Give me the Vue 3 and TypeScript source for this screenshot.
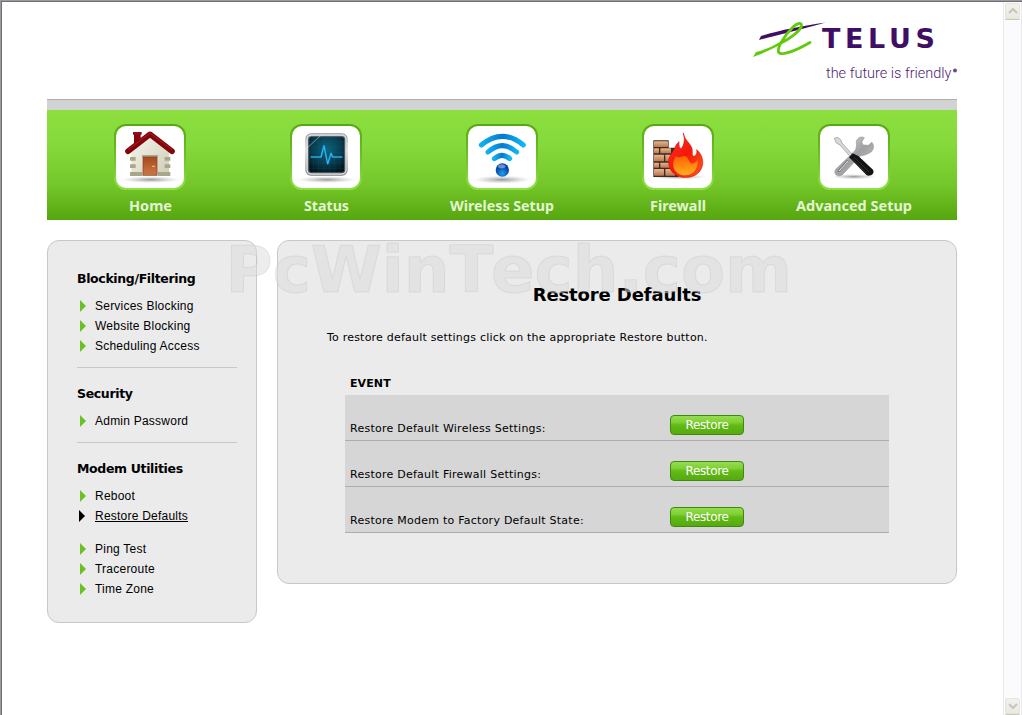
<script setup lang="ts">
interface NavItem {
  id: string
  label: string
  width: number
}
interface MenuLink {
  label: string
  active?: boolean
}
interface MenuGroup {
  title: string
  links: MenuLink[]
}

const nav: NavItem[] = [
  { id: 'home', label: 'Home', width: 43 },
  { id: 'status', label: 'Status', width: 45 },
  { id: 'wireless', label: 'Wireless Setup', width: 104 },
  { id: 'firewall', label: 'Firewall', width: 56 },
  { id: 'advanced', label: 'Advanced Setup', width: 116 },
]

const groups: MenuGroup[] = [
  {
    title: 'Blocking/Filtering',
    links: [{ label: 'Services Blocking' }, { label: 'Website Blocking' }, { label: 'Scheduling Access' }],
  },
  { title: 'Security', links: [{ label: 'Admin Password' }] },
  {
    title: 'Modem Utilities',
    links: [
      { label: 'Reboot' },
      { label: 'Restore Defaults', active: true },
      { label: 'Ping Test' },
      { label: 'Traceroute' },
      { label: 'Time Zone' },
    ],
  },
]

const events: string[] = [
  'Restore Default Wireless Settings:',
  'Restore Default Firewall Settings:',
  'Restore Modem to Factory Default State:',
]
</script>

<template>
  <div class="window">
    <div class="page">
      <header class="header">
        <svg class="logo" viewBox="0 0 220 70" width="220" height="70">
          <path d="M8 24 L10 20 C30 14 50 10 75 6.500 C58 11 40 16 8 24Z" fill="#3f0f66" />
          <path d="M29 27.500 C39 23 49 15 50.500 10 C51 6 46 7 42 11 C34 19 26 31 27.500 36 C30 41 46 34 59 26.500" fill="none" stroke="#5fcb0c" stroke-width="2.800" stroke-linecap="round" stroke-linejoin="round" />
          <path d="M2 41 L5 36 C14 34 22 30 30 25.500 L31 28 C21 33 11 38 2 41Z" fill="#5fcb0c" />
          <text x="71" y="31.5" class="brand" textLength="113" lengthAdjust="spacing">TELUS</text>
          <text x="75" y="62" class="tagline" textLength="125.500" lengthAdjust="spacingAndGlyphs">the future is friendly</text>
          <circle cx="204" cy="54.500" r="2" fill="#6c4a8c" />
        </svg>
      </header>

      <nav class="nav">
        <a v-for="item in nav" :key="item.id" class="nav-item">
          <span class="tile">
            <svg v-if="item.id === 'home'" viewBox="48 93 204 186" width="68" height="62">
              <defs>
                <linearGradient id="wall" x1="0" y1="0" x2="1" y2="1"><stop offset="0" stop-color="#f6f6ec" /><stop offset="1" stop-color="#cfcdb9" /></linearGradient>
                <linearGradient id="door" x1="0" y1="0" x2="0" y2="1"><stop offset="0" stop-color="#a34a1c" /><stop offset="1" stop-color="#d07a48" /></linearGradient>
                <radialGradient id="shade"><stop offset="0" stop-color="#777" stop-opacity=".75" /><stop offset="1" stop-color="#aaa" stop-opacity="0" /></radialGradient>
              </defs>
              <ellipse cx="152" cy="254" rx="88" ry="10" fill="url(#shade)" />
              <path d="M94 168 L150 118 L207 168 V242 H94Z" fill="url(#wall)" />
              <path d="M90 186h17v11H90zM90 208h17v11H90zM90 231h37v12H90zM194 186h17v11h-17zM194 208h17v11h-17zM174 231h37v12h-37zM126 180h48v7h-48z" fill="#aaa68a" />
              <path d="M129 186h42v55h-42z" fill="url(#door)" stroke="#85401d" stroke-width="2" />
              <path d="M134 191h32M134 235h32" stroke="#bd602d" stroke-width="1" />
              <path d="M156 214h9" stroke="#ffd9a0" stroke-width="2.500" />
              <path d="M102 113h20v24l-20 14z" fill="#86060d" />
              <path d="M99 111h26v8H99z" fill="#9c0911" />
              <path d="M84 169 L150 118 L216 169" fill="none" stroke="#83050c" stroke-width="17" stroke-linecap="round" stroke-linejoin="round" />
              <path d="M84 164 L150 114 L216 164" fill="none" stroke="#ae1d22" stroke-width="3" />
            </svg>

            <svg v-else-if="item.id === 'status'" viewBox="576 93 204 186" width="68" height="62">
              <defs>
                <linearGradient id="rim" x1="0" y1="0" x2="0" y2="1"><stop offset="0" stop-color="#8f9298" /><stop offset=".4" stop-color="#d8d8da" /><stop offset="1" stop-color="#7c7d82" /></linearGradient>
                <radialGradient id="screen" cx=".5" cy=".35" r=".7"><stop offset="0" stop-color="#0b6480" /><stop offset=".6" stop-color="#083b4d" /><stop offset="1" stop-color="#03141d" /></radialGradient>
              </defs>
              <ellipse cx="680" cy="254" rx="88" ry="10" fill="url(#shade)" />
              <rect x="616" y="115" width="127" height="127" rx="17" fill="url(#rim)" />
              <rect x="621" y="120" width="117" height="117" rx="12" fill="none" stroke="#dfe0e3" stroke-width="4" />
              <rect x="626" y="125" width="108" height="108" rx="8" fill="url(#screen)" stroke="#4e5a62" stroke-width="3" />
              <path d="M640 127v104M656 127v104M672 127v104M688 127v104M704 127v104M720 127v104M628 140h104M628 156h104M628 172h104M628 204h104M628 220h104" stroke="#1b6077" stroke-width="1" opacity=".55" />
              <path d="M632 186h31l9-34 11 55 10-32 5 11h29" fill="none" stroke="#168cd0" stroke-width="6" opacity=".5" />
              <path d="M632 186h31l9-34 11 55 10-32 5 11h29" fill="none" stroke="#2bb9f5" stroke-width="3.500" stroke-linejoin="round" />
              <path d="M616 164 L667 117" stroke="#dde7ea" stroke-width="2" opacity=".75" />
            </svg>

            <svg v-else-if="item.id === 'wireless'" viewBox="84 48 204 186" width="68" height="62">
              <defs>
                <linearGradient id="wave" x1="0" y1="0" x2="1" y2="0"><stop offset="0" stop-color="#0cb2ef" /><stop offset=".5" stop-color="#0878cf" /><stop offset="1" stop-color="#0cb9f2" /></linearGradient>
                <radialGradient id="ball" cx=".5" cy=".75" r=".75"><stop offset="0" stop-color="#1fa2ef" /><stop offset=".6" stop-color="#0750b0" /><stop offset="1" stop-color="#083781" /></radialGradient>
              </defs>
              <ellipse cx="186" cy="209" rx="86" ry="12" fill="url(#shade)" />
              <g fill="none" stroke="url(#wave)" stroke-width="15" stroke-linecap="round">
                <path d="M124 105 Q187 53 250 105" />
                <path d="M144 126 Q187 88 230 126" />
                <path d="M163 146 Q187 126 209 146" />
              </g>
              <circle cx="187" cy="180" r="20" fill="url(#ball)" />
              <ellipse cx="185" cy="169" rx="11" ry="6" fill="#9ac8ef" opacity=".6" />
            </svg>

            <svg v-else-if="item.id === 'firewall'" viewBox="612 48 204 186" width="68" height="62">
              <defs>
                <linearGradient id="brick" x1="0" y1="0" x2="0" y2="1"><stop offset="0" stop-color="#e9b58b" /><stop offset="1" stop-color="#b87850" /></linearGradient>
                <linearGradient id="flame" x1="0" y1="0" x2="1" y2="1"><stop offset="0" stop-color="#f33" /><stop offset=".5" stop-color="#f51808" /><stop offset="1" stop-color="#ff5b1b" /></linearGradient>
                <linearGradient id="core" x1="0" y1="0" x2="0" y2="1"><stop offset="0" stop-color="#ff6a00" /><stop offset="1" stop-color="#ffbd23" /></linearGradient>
              </defs>
              <ellipse cx="716" cy="201" rx="84" ry="7" fill="url(#shade)" />
              <path d="M640 91h46v22h30v88h-76z" fill="#3b2d26" />
              <g fill="url(#brick)">
                <rect x="642" y="94" width="42" height="17" rx="2" />
                <rect x="642" y="115" width="15" height="15" rx="2" /><rect x="661" y="115" width="32" height="15" rx="2" />
                <rect x="642" y="134" width="30" height="20" rx="2" /><rect x="676" y="134" width="30" height="20" rx="2" />
                <rect x="642" y="158" width="15" height="15" rx="2" /><rect x="661" y="158" width="30" height="15" rx="2" />
                <rect x="642" y="177" width="30" height="20" rx="2" /><rect x="676" y="177" width="30" height="20" rx="2" />
              </g>
              <path d="M730 69 C733 91 751 98 756 116 C758 125 755 134 759 139 C767 139 773 130 770 119 C783 130 789 145 788 161 C785 187 765 202 737 202 C707 202 687 184 686 158 C685 137 698 130 704 115 C707 107 710 101 717 95 C716 107 718 113 723 117 C734 103 735 88 730 69Z" fill="url(#flame)" stroke="#e31208" stroke-width="2" />
              <path d="M708 138 C717 149 732 131 740 141 C748 151 750 164 760 160 C767 158 771 153 773 150 C775 174 762 194 738 196 C711 196 697 178 700 158 C701 149 705 144 708 138Z" fill="url(#core)" opacity=".9" />
            </svg>

            <svg v-else viewBox="120 48 204 186" width="68" height="62">
              <defs>
                <linearGradient id="steel" x1="0" y1="0" x2="1" y2="1"><stop offset="0" stop-color="#e9e9e9" /><stop offset=".5" stop-color="#a0a0a2" /><stop offset="1" stop-color="#c8c8ca" /></linearGradient>
              </defs>
              <ellipse cx="222" cy="200" rx="66" ry="8" fill="url(#shade)" />
              <path d="M216 131 L167 178 C161 188 168 200 180 197 C186 196 190 192 193 188 L240 138 C254 136 265 132 273 126 C283 117 282 107 276 97 L265 106 L249 105 L245 96 L253 83 C242 77 228 86 229 98 C230 111 230 119 216 131Z" fill="url(#steel)" stroke="#98989b" stroke-width="2" />
              <path d="M202 153 L176 183" stroke="#757579" stroke-width="6" stroke-linecap="round" />
              <path d="M203 154 L178 182" stroke="#eee" stroke-width="3" stroke-linecap="round" />
              <path d="M163 85 L173 82 L182 89 L186 99 L216 132 L210 139 L180 105 L169 99Z" fill="#d9d9db" stroke="#8f8f93" stroke-width="2" />
              <path d="M207 142 L218 130 L235 138 L279 179 C285 190 273 200 260 196 L219 154Z" fill="#141415" />
              <path d="M223 142l43 43M218 147l41 43" stroke="#47484c" stroke-width="1.500" />
            </svg>
          </span>
          <svg class="nav-label" :width="item.width + 16" height="24">
            <text x="8" y="16" :textLength="item.width" lengthAdjust="spacingAndGlyphs">{{ item.label }}</text>
          </svg>
        </a>
      </nav>

      <div class="columns">
        <aside class="panel sidebar">
          <section v-for="group in groups" :key="group.title" class="group">
            <h2>{{ group.title }}</h2>
            <ul>
              <li v-for="link in group.links" :key="link.label" :class="{ active: link.active }">
                <i class="arrow"></i><a>{{ link.label }}</a>
              </li>
            </ul>
          </section>
        </aside>

        <main class="panel content">
          <h1>Restore Defaults</h1>
          <p class="intro">To restore default settings click on the appropriate Restore button.</p>
          <div class="events">
            <div class="events-head">EVENT</div>
            <div v-for="event in events" :key="event" class="event">
              <span class="event-name">{{ event }}</span>
              <button type="button">Restore</button>
            </div>
          </div>
        </main>

        <svg class="watermark" width="570" height="70">
          <text y="52"><tspan x="-2.500" textLength="268" lengthAdjust="spacingAndGlyphs">PcWinT</tspan><tspan x="263" textLength="301" lengthAdjust="spacingAndGlyphs">ech.com</tspan></text>
        </svg>
      </div>
    </div>

    <div class="scrollbar">
      <span class="scroll-btn"><svg width="10" height="8" viewBox="0 0 10 8"><path d="M1 6 L5 2 L9 6" /></svg></span>
      <span class="scroll-btn"><svg width="10" height="8" viewBox="0 0 10 8"><path d="M1 2 L5 6 L9 2" /></svg></span>
    </div>
  </div>
</template>

<style>
html,
body {
  margin: 0;
  background: #fff;
  overflow: hidden;
}
</style>

<style scoped>
* {
  box-sizing: border-box;
}
.window {
  width: 1022px;
  height: 715px;
  display: flex;
  justify-content: space-between;
  background: #fff;
  border-left: 1px solid #9c9aa0;
  border-top: 1px solid #9c9aa0;
  box-shadow: inset 1px 1px 0 #716f74;
  overflow: hidden;
  color: #000;
  font-family: 'DejaVu Sans', sans-serif;
}
.page {
  width: 910px;
  margin-left: 46px;
}
.header {
  height: 98px;
  display: flex;
  justify-content: flex-end;
  padding-top: 15px;
}
.logo {
  display: block;
  margin-right: -14px;
  overflow: visible;
}
.brand {
  font: bold 27px 'DejaVu Sans', sans-serif;
  fill: #3f0f66;
}
.tagline {
  font: 300 15.5px Roboto, sans-serif;
  fill: #4a2472;
}
.nav {
  height: 121px;
  padding: 14px 15px 0;
  display: flex;
  border-top: 1px solid #adadad;
  background:
    linear-gradient(#d3d3d3, #d3d3d3) 0 0 / 100% 10px no-repeat,
    linear-gradient(#8ddf40 10px, #86d93a 45px, #74c72a 85px, #56a60f 120px);
}
.nav-item {
  width: 176px;
  display: flex;
  flex-direction: column;
  align-items: center;
  padding-top: 10px;
}
.tile {
  width: 72px;
  height: 66px;
  padding: 2px;
  border-radius: 12px;
  background: linear-gradient(#55a90f, #6fc02a 50%, #90e243);
}
.tile svg {
  display: block;
  background: #fff;
  border-radius: 10px;
}
.nav-label {
  display: block;
  margin-top: 5px;
}
.nav-label text {
  font: bold 15px 'Noto Sans', sans-serif;
  fill: #e4f4d3;
}
.columns {
  position: relative;
  display: flex;
  align-items: flex-start;
  gap: 20px;
  margin-top: 20px;
}
.panel {
  background: #ebebeb;
  border: 1px solid #c8c8c8;
  border-radius: 12px;
}
.sidebar {
  width: 210px;
  height: 383px;
  padding: 28px 19px 0 29px;
}
.group {
  height: 115px;
}
.group + .group {
  height: 75px;
  margin: 0;
}
.group h2 {
  margin: 0;
  height: 27px;
  font-size: 12.5px;
  line-height: 20px;
  letter-spacing: -0.35px;
}
.group ul {
  margin: 0;
  padding: 0 0 11px;
  list-style: none;
}
.group:not(:last-child) ul {
  border-bottom: 1px solid #c8c8c8;
}
.group li {
  height: 20px;
  padding-left: 3px;
  display: flex;
  align-items: center;
  font: 12px/20px 'Liberation Sans', Arial, sans-serif;
  letter-spacing: 0.23px;
}
.arrow {
  width: 0;
  height: 0;
  margin-right: 9px;
  border-left: 6px solid #6cc024;
  border-top: 6px solid transparent;
  border-bottom: 6px solid transparent;
}
.group li.active {
  margin-bottom: 13px;
}
.active .arrow {
  margin-left: -1px;
  margin-right: 10px;
  border-left-color: #000;
}
.active a {
  text-decoration: underline;
}
.content {
  width: 680px;
  height: 344px;
  padding: 42px 67px 0;
}
h1 {
  margin: 0;
  text-align: center;
  font-size: 18px;
  line-height: 24px;
  letter-spacing: -0.12px;
}
.intro {
  margin: 23px 0 0 -18px;
  font-size: 11px;
  line-height: 16px;
  letter-spacing: 0.21px;
}
.events {
  width: 544px;
  margin-top: 30px;
}
.events-head {
  height: 19px;
  padding-left: 5px;
  font-size: 11px;
  font-weight: bold;
  line-height: 16px;
  letter-spacing: 0.1px;
}
.event {
  height: 46px;
  display: flex;
  align-items: flex-start;
  padding: 20px 0 0 5px;
  background: #d6d6d6;
  border-bottom: 1px solid #adadad;
}
.event-name {
  width: 320px;
  padding-top: 6px;
  font-size: 11px;
  line-height: 16px;
  letter-spacing: 0.25px;
}
button {
  width: 74px;
  height: 20px;
  padding: 0;
  border: 1px solid #3f8a0b;
  border-radius: 4px;
  background: linear-gradient(#94dc52, #7fd035 35%, #62bb15 50%, #55aa10);
  color: #fff;
  font: 12px/17px 'DejaVu Sans', sans-serif;
  letter-spacing: -0.35px;
}
.watermark {
  position: absolute;
  left: 181px;
  top: 0;
  overflow: visible;
  pointer-events: none;
}
.watermark text {
  font: bold 64.5px 'DejaVu Sans', sans-serif;
  fill: rgba(219, 219, 219, 0.5);
  stroke: rgba(190, 190, 190, 0.3);
  stroke-width: 1px;
}
.scrollbar {
  width: 19px;
  margin-top: 1px;
  display: flex;
  flex-direction: column;
  justify-content: space-between;
  border-left: 1px solid #e9e9ed;
  border-right: 1px solid #e9e9ed;
  background: #fbfbfd;
}
.scroll-btn {
  width: 17px;
  height: 18px;
  display: flex;
  align-items: center;
  justify-content: center;
  background: linear-gradient(#f3f3ee, #e9e9e0);
  border: 1px solid #fff;
  border-bottom-color: #c9c8b4;
  border-radius: 3px;
  box-shadow: inset 0 0 0 1px #e4e4da;
}
.scroll-btn path {
  fill: none;
  stroke: #c6c5bf;
  stroke-width: 2.2;
}
</style>
